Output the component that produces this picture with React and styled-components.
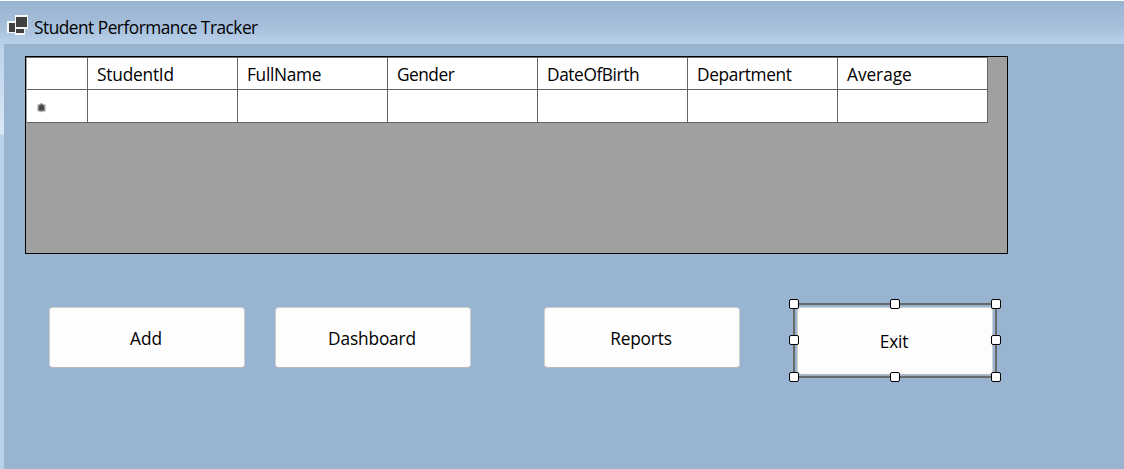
import React from "react";
import styled, { createGlobalStyle } from "styled-components";

const Global = createGlobalStyle`
  * { box-sizing: border-box; }
  body {
    margin: 0;
    overflow: hidden;
    font-family: "Open Sans", "Noto Sans", sans-serif;
    font-size: 17.3px;
    color: #000;
  }
`;

const Window = styled.div`
  width: 1124px;
  height: 469px;
  display: flex;
  flex-direction: column;
  border-top: 1px solid #fdfeff;
  background: #b9d1ea;
`;

const TitleBar = styled.header`
  height: 43px;
  flex: none;
  display: flex;
  align-items: flex-start;
  padding: 14px 0 0 7px;
  gap: 6px;
  background: linear-gradient(#99b4d1, #a6bfdb 60%, #b9d1ea);
`;

const Text = styled.span`
  display: block;
  white-space: nowrap;
  line-height: 24px;
  letter-spacing: ${(p) => p.$track || 0}px;
`;

const Title = styled(Text)`
  padding-top: 1px;
`;

const Body = styled.div`
  flex: 1;
  display: flex;
`;

const Edge = styled.div`
  width: 4px;
  flex: none;
  background: linear-gradient(#b9d1ea, #dce8f5 90px, #b9d1ea 91px);
`;

const Client = styled.main`
  flex: 1;
  padding: 12px 0 0 21px;
  background: #99b4d1;
`;

const Grid = styled.section`
  width: 983px;
  height: 198px;
  border: 1px solid #000;
  background: #a0a0a0;
`;

const GridRow = styled.div`
  display: grid;
  grid-template-columns: 61px repeat(6, 150px);
  width: 962px;
  height: ${(p) => p.$height}px;
  border-left: 1px solid #a0a0a0;
  border-top: ${(p) => (p.$first ? "1px solid #696969" : "0")};
`;

const Cell = styled.div`
  display: flex;
  align-items: center;
  padding: 2px 0 0 9px;
  background: #fff;
  border-right: 1px solid #646464;
  border-bottom: 1px solid #646464;
`;

const MarkerCell = styled(Cell)`
  padding: 4px 0 0 10px;
`;

const Actions = styled.div`
  display: flex;
  align-items: flex-start;
  padding: 53px 0 0 24px;
`;

const Button = styled.button`
  width: 196px;
  height: ${(p) => p.$height || 61}px;
  margin: 0 ${(p) => p.$after || 0}px 0 0;
  padding: 2px 2px 0 0;
  display: flex;
  align-items: center;
  justify-content: center;
  font: inherit;
  color: #000;
  background: #fdfdfd;
  border: 1px solid #d0d0d0;
  border-bottom-color: #b8b8b8;
  border-radius: 4px;
`;

const Selection = styled.div`
  position: relative;
  width: 204px;
  height: 75px;
  margin-top: -4px;
  padding: 2px 0 0 2px;
  border: 2px solid #696969;
`;

const Handle = styled.i`
  position: absolute;
  left: ${(p) => p.$x}px;
  top: ${(p) => p.$y}px;
  width: 10px;
  height: 10px;
  background: #fff;
  border: 1px solid #000;
  border-radius: 2px;
`;

const columns = [
  ["StudentId", -0.2],
  ["FullName", -0.3],
  ["Gender", -0.5],
  ["DateOfBirth", -0.4],
  ["Department", -0.35],
  ["Average", -0.05],
];

const handles = [
  [-6, -6], [95, -6], [196, -6],
  [-6, 30], [196, 30],
  [-6, 67], [95, 67], [196, 67],
];

const FormIcon = () => (
  <svg width="21" height="21" viewBox="0 0 21 21" shapeRendering="crispEdges">
    <path fill="#f8f8f8" d="M8 0h13v14h-3v6H8v-2H0V6h8z" />
    <path fill="#404040" d="M9 2h11v10H9zM2 8h6v9H2zM9 14h8v4H9z" />
  </svg>
);

const NewRowMark = () => (
  <svg width="9" height="10" viewBox="0 0 9 10">
    <path fill="#a8a8a8" d="M3.5 0h2l.6 1.2H8.5V4l.5 1-.5 1v2.5H6l-1.5 1-1.5-1H.5V6L0 5l.5-1V1.3H3z" />
    <path fill="#484848" d="M4.5 1.2 7 2.5 7.4 7.5H1.6L2 2.5z" />
  </svg>
);

export default function App() {
  return (
    <Window>
      <Global />
      <TitleBar>
        <FormIcon />
        <Title $track={-0.5}>Student Performance Tracker</Title>
      </TitleBar>
      <Body>
        <Edge />
        <Client>
          <Grid>
            <GridRow $first $height={33}>
              <Cell />
              {columns.map(([name, track]) => (
                <Cell key={name}><Text $track={track}>{name}</Text></Cell>
              ))}
            </GridRow>
            <GridRow $height={33}>
              <MarkerCell><NewRowMark /></MarkerCell>
              {columns.map(([name]) => <Cell key={name} />)}
            </GridRow>
          </Grid>
          <Actions>
            <Button $after={30}><Text>Add</Text></Button>
            <Button $after={73}><Text $track={-0.15}>Dashboard</Text></Button>
            <Button $after={53}><Text $track={-0.15}>Reports</Text></Button>
            <Selection>
              <Button $height={68}><Text $track={-0.2}>Exit</Text></Button>
              {handles.map(([x, y]) => <Handle key={`${x},${y}`} $x={x} $y={y} />)}
            </Selection>
          </Actions>
        </Client>
      </Body>
    </Window>
  );
}
